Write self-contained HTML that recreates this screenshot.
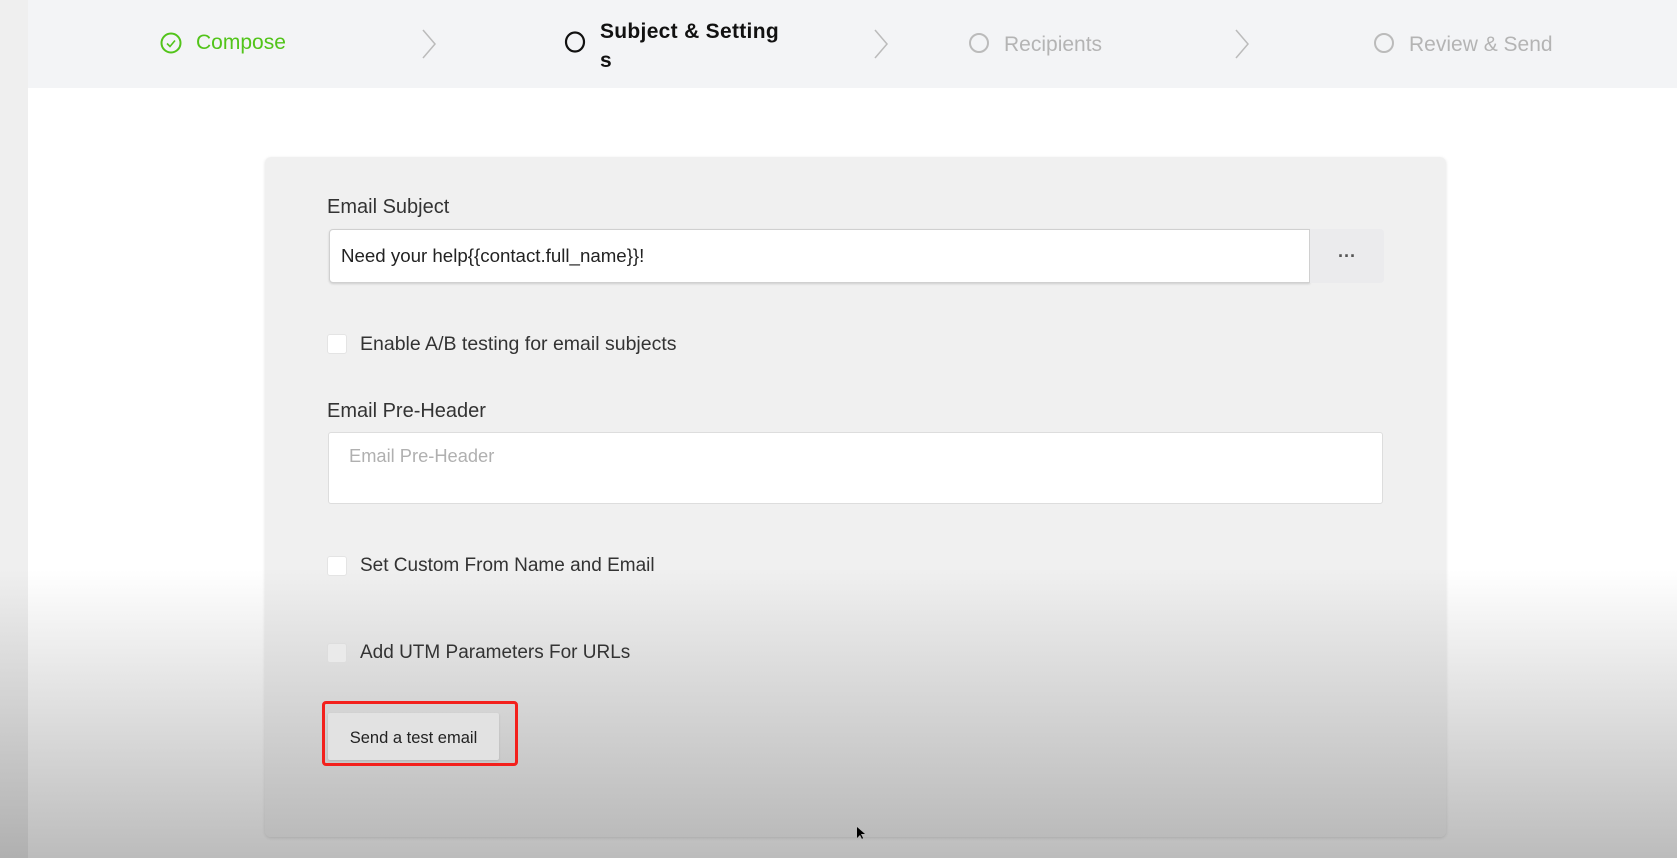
<!DOCTYPE html>
<html><head><style>
*{box-sizing:border-box;margin:0;padding:0}
body{width:1677px;height:858px;overflow:hidden;font-family:"Liberation Sans",sans-serif;background:linear-gradient(#fff 0,#fff 570px,#bcbcbc 858px);position:relative}
.strip{position:absolute;left:0;top:0;width:28px;height:858px;background:linear-gradient(#efefef 0,#efefef 570px,#b0b0b0 858px)}
.hdr{position:absolute;left:28px;top:0;width:1649px;height:88px;background:#f3f4f6}
.a{position:absolute;white-space:nowrap}
.step{font-size:21px;color:#b4b4b4}
.card{position:absolute;left:265px;top:157px;width:1181px;height:680px;border-radius:6px;background:linear-gradient(#f0f0f0 0,#f0f0f0 410px,#bbb 680px);box-shadow:0 1px 3px rgba(0,0,0,.12)}
.lbl{font-size:19.5px;color:#333}
.cb{position:absolute;width:20px;height:20px;background:#fff;border-radius:3px;border:1px solid #e4e4e4}
</style></head><body>
<div class="strip"></div>
<div class="hdr"></div>
<svg class="a" style="left:160px;top:32px" width="22" height="22" viewBox="0 0 22 22"><circle cx="11" cy="11" r="9.5" fill="none" stroke="#52c41a" stroke-width="2"/><path d="M7 11.5l3 3 5-6" fill="none" stroke="#52c41a" stroke-width="1.6"/></svg>
<div class="a step" style="left:196px;top:31px;color:#52c41a">Compose</div>
<svg class="a" style="left:420px;top:28px" width="18" height="32"><path d="M3 2l12 14L3 30" fill="none" stroke="#bbb" stroke-width="1.5"/></svg>
<svg class="a" style="left:564px;top:30px" width="22" height="24"><ellipse cx="11" cy="12" rx="9" ry="9.5" fill="none" stroke="#111" stroke-width="2.2"/></svg>
<div class="a" style="left:600px;top:17px;font-size:21px;font-weight:bold;color:#111;line-height:29px;letter-spacing:0.3px">Subject &amp; Setting<br>s</div>
<svg class="a" style="left:872px;top:28px" width="18" height="32"><path d="M3 2l12 14L3 30" fill="none" stroke="#bbb" stroke-width="1.5"/></svg>
<svg class="a" style="left:968px;top:32px" width="22" height="22"><circle cx="11" cy="11" r="9" fill="none" stroke="#bbb" stroke-width="2"/></svg>
<div class="a step" style="left:1004px;top:33px">Recipients</div>
<svg class="a" style="left:1233px;top:28px" width="18" height="32"><path d="M3 2l12 14L3 30" fill="none" stroke="#bbb" stroke-width="1.5"/></svg>
<svg class="a" style="left:1373px;top:32px" width="22" height="22"><circle cx="11" cy="11" r="9" fill="none" stroke="#bbb" stroke-width="2"/></svg>
<div class="a step" style="left:1409px;top:33px">Review &amp; Send</div>

<div class="card"></div>
<div class="a lbl" style="left:327px;top:196px;font-size:20px">Email Subject</div>
<div class="a" style="left:329px;top:229px;width:981px;height:54px;background:#fff;border:1px solid #d0d0d0;border-radius:4px 0 0 4px;box-shadow:0 1px 2px rgba(0,0,0,.15)"></div>
<div class="a" style="left:341px;top:245px;font-size:18.7px;color:#222">Need your help{{contact.full_name}}!</div>
<div class="a" style="left:1310px;top:229px;width:74px;height:54px;background:#ebebed;border-radius:0 4px 4px 0;text-align:center;line-height:54px;font-size:18px;color:#555;font-weight:bold">···</div>
<div class="cb" style="left:327px;top:334px"></div>
<div class="a lbl" style="left:360px;top:333px">Enable A/B testing for email subjects</div>
<div class="a lbl" style="left:327px;top:400px;font-size:20px">Email Pre-Header</div>
<div class="a" style="left:328px;top:432px;width:1055px;height:72px;background:#fff;border:1px solid #ddd;border-radius:3px"></div>
<div class="a" style="left:349px;top:445px;font-size:18.3px;color:#b0b0b0">Email Pre-Header</div>
<div class="cb" style="left:327px;top:556px"></div>
<div class="a lbl" style="left:360px;top:555px;font-size:19px">Set Custom From Name and Email</div>
<div class="cb" style="left:327px;top:643px;background:#eaeaea;border-color:#ddd"></div>
<div class="a lbl" style="left:360px;top:642px;font-size:19px">Add UTM Parameters For URLs</div>
<div class="a" style="left:322px;top:701px;width:196px;height:65px;border:3px solid #f3201c;border-radius:4px"></div>
<div class="a" style="left:328px;top:713px;width:171px;height:47px;background:#e2e2e2;border-radius:2px;text-align:center;line-height:50px;font-size:16.5px;color:#222;box-shadow:0 1px 2px rgba(0,0,0,.12)">Send a test email</div>
<svg class="a" style="left:856px;top:826px" width="10" height="14"><path d="M1 1v11l3-3 2 4 1-1-2-4h4z" fill="#000"/></svg>
</body></html>
